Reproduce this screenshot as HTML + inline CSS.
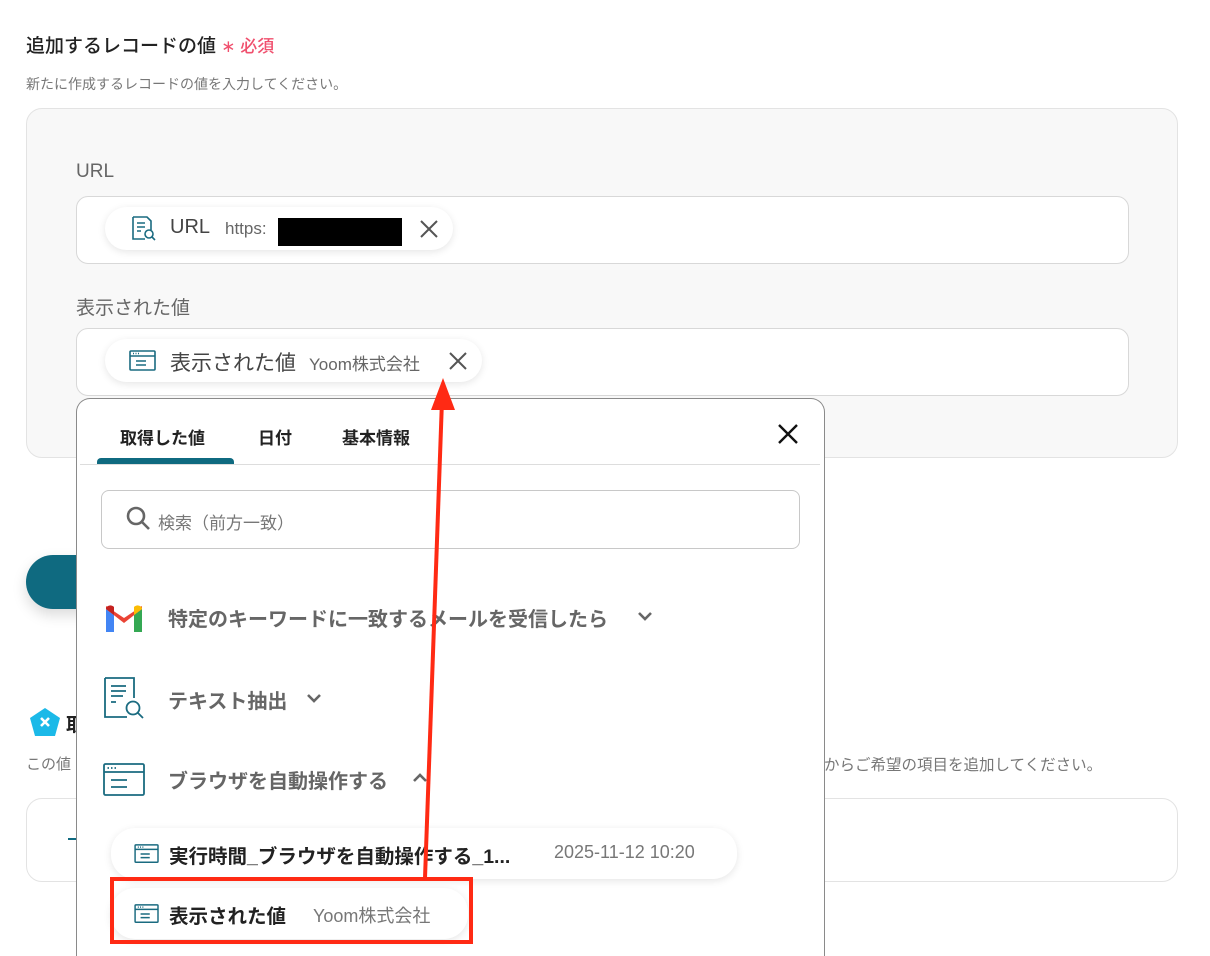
<!DOCTYPE html>
<html><head><meta charset="utf-8"><style>
*{box-sizing:border-box;margin:0;padding:0}
html,body{width:1210px;height:956px;overflow:hidden}
body{background:#fff;font-family:"Liberation Sans","Noto Sans CJK JP",sans-serif;position:relative;color:#333}
.abs{position:absolute}
.chip{position:absolute;background:#fff;border-radius:24px;box-shadow:0 2px 8px rgba(0,0,0,.1);display:flex;align-items:center}
.lbl{font-size:19px;color:#666}
</style></head><body>
<div class="abs" style="left:26px;top:31px;font-size:19px;font-weight:500;color:#222">追加するレコードの値 <span style="color:#f0506e;font-size:17px">∗ 必須</span></div>
<div class="abs" style="left:26px;top:74px;font-size:14px;color:#777">新たに作成するレコードの値を入力してください。</div>
<div class="abs" style="left:26px;top:108px;width:1152px;height:350px;background:#f8f8f8;border:1px solid #e3e3e3;border-radius:16px"></div>
<div class="abs lbl" style="left:76px;top:161px">URL</div>
<div class="abs" style="left:76px;top:196px;width:1053px;height:68px;background:#fff;border:1px solid #d8d8d8;border-radius:12px"></div>
<div class="chip" style="left:105px;top:207px;width:348px;height:43px">
<svg class="abs" style="left:25px;top:8px" width="28" height="28" viewBox="0 0 28 28" fill="none" stroke="#1a6b80" stroke-width="1.6"><path d="M3 2h14l4 4v9M3 2v22h12"/><path d="M7 8h8M7 12h8M7 16h4"/><circle cx="19" cy="19" r="4"/><path d="M22 22l3 3"/></svg>
<span class="abs" style="left:65px;top:9px;font-size:20px;color:#444">URL</span>
<span class="abs" style="left:120px;top:12px;font-size:17px;color:#666">https:</span>
<div class="abs" style="left:173px;top:11px;width:124px;height:28px;background:#000"></div>
<svg class="abs" style="left:315px;top:13px" width="18" height="18" viewBox="0 0 18 18"><path d="M1 1l16 16M17 1L1 17" stroke="#555" stroke-width="2"/></svg>
</div>
<div class="abs lbl" style="left:76px;top:293px">表示された値</div>
<div class="abs" style="left:76px;top:328px;width:1053px;height:68px;background:#fff;border:1px solid #d8d8d8;border-radius:12px"></div>
<div class="chip" style="left:105px;top:339px;width:377px;height:43px">
<svg class="abs" style="left:24px;top:10px" width="28" height="24" viewBox="0 0 28 24" fill="none" stroke="#1a6b80" stroke-width="1.6"><rect x="1" y="2" width="25" height="19" rx="1"/><path d="M1 7h25M7 12h10M7 16h10"/><path d="M4 4.5h1M6.5 4.5h1M9 4.5h1"/></svg>
<span class="abs" style="left:65px;top:8px;font-size:21px;color:#444">表示された値</span>
<span class="abs" style="left:204px;top:11px;font-size:17px;color:#666">Yoom株式会社</span>
<svg class="abs" style="left:344px;top:13px" width="18" height="18" viewBox="0 0 18 18"><path d="M1 1l16 16M17 1L1 17" stroke="#555" stroke-width="2"/></svg>
</div>
<div class="abs" style="left:26px;top:555px;width:100px;height:54px;background:#0f6a80;border-radius:27px;box-shadow:0 6px 14px rgba(0,0,0,.15)"></div>
<svg class="abs" style="left:29px;top:707px" width="32" height="30" viewBox="0 0 32 30"><path d="M16 1L31 11L26 29H6L1 11Z" fill="#1bb9e8"/><path d="M12 11l8 8M20 11l-8 8" stroke="#fff" stroke-width="2.6"/></svg>
<div class="abs" style="left:66px;top:710px;font-size:19px;font-weight:bold;color:#222">取</div>
<div class="abs" style="left:26px;top:753px;font-size:15px;color:#777">この値</div>
<div class="abs" style="left:824px;top:753px;font-size:15.5px;color:#777">からご希望の項目を追加してください。</div>
<div class="abs" style="left:26px;top:798px;width:1152px;height:84px;background:#fff;border:1px solid #e3e3e3;border-radius:16px"></div>
<div class="abs" style="left:68px;top:838px;width:12px;height:2px;background:#0f6a80"></div>
<div class="abs" style="left:76px;top:398px;width:749px;height:558px;background:#fff;border:1.5px solid #8a8a8a;border-bottom:none;border-radius:14px 14px 0 0"></div>
<div class="abs" style="left:120px;top:424px;font-size:17px;font-weight:bold;color:#222">取得した値</div>
<div class="abs" style="left:258px;top:424px;font-size:17px;font-weight:bold;color:#222">日付</div>
<div class="abs" style="left:342px;top:424px;font-size:17px;font-weight:bold;color:#222">基本情報</div>
<div class="abs" style="left:97px;top:458px;width:137px;height:6px;background:#0f6a80;border-radius:4px 4px 0 0"></div>
<div class="abs" style="left:80px;top:464px;width:740px;height:1px;background:#ddd"></div>
<svg class="abs" style="left:777px;top:423px" width="22" height="22" viewBox="0 0 22 22"><path d="M2 2l18 18M20 2L2 20" stroke="#111" stroke-width="2.4"/></svg>
<div class="abs" style="left:101px;top:490px;width:699px;height:59px;border:1px solid #c8c8c8;border-radius:8px"></div>
<svg class="abs" style="left:126px;top:506px" width="26" height="26" viewBox="0 0 26 26" fill="none" stroke="#666" stroke-width="2.6"><circle cx="10" cy="10" r="8"/><path d="M16 16l7 7"/></svg>
<div class="abs" style="left:158px;top:509px;font-size:17px;color:#777">検索（前方一致）</div>
<svg class="abs" style="left:104px;top:603px" width="40" height="29" viewBox="0 0 40 29"><path d="M2 6v23h8V12z" fill="#4285f4"/><path d="M30 12v17h8V6z" fill="#34a853"/><path d="M2 6l18 14L38 6V3L20 15 2 3z" fill="#ea4335"/><path d="M30 4v8l8-6V5a5 5 0 00-8-1z" fill="#fbbc04"/><path d="M10 4v8L2 6V5a5 5 0 018-1z" fill="#c5221f"/></svg>
<div class="abs" style="left:168px;top:603px;font-size:20px;font-weight:bold;color:#666">特定のキーワードに一致するメールを受信したら</div>
<svg class="abs" style="left:637px;top:610px" width="16" height="12" viewBox="0 0 16 12"><path d="M2 3l6 6 6-6" fill="none" stroke="#666" stroke-width="2.6"/></svg>
<svg class="abs" style="left:103px;top:676px" width="44" height="44" viewBox="0 0 44 44" fill="none" stroke="#1a6b80" stroke-width="1.8"><path d="M2 2h29v20M2 2v39h22"/><path d="M8 10h15M8 15h15M8 20h12M8 26h5"/><circle cx="30" cy="32" r="6.5"/><path d="M35 37l5 5"/></svg>
<div class="abs" style="left:168px;top:685px;font-size:20px;font-weight:bold;color:#666">テキスト抽出</div>
<svg class="abs" style="left:306px;top:692px" width="16" height="12" viewBox="0 0 16 12"><path d="M2 3l6 6 6-6" fill="none" stroke="#666" stroke-width="2.6"/></svg>
<svg class="abs" style="left:103px;top:763px" width="43" height="34" viewBox="0 0 43 34" fill="none" stroke="#1a6b80" stroke-width="1.8"><rect x="1" y="1" width="40" height="31" rx="1.5"/><path d="M1 9h40M8 17h16M8 24h16"/><path d="M4.5 5h1.5M8 5h1.5M11.5 5h1.5"/></svg>
<div class="abs" style="left:168px;top:765px;font-size:20px;font-weight:bold;color:#666">ブラウザを自動操作する</div>
<svg class="abs" style="left:412px;top:772px" width="16" height="12" viewBox="0 0 16 12"><path d="M2 9l6-6 6 6" fill="none" stroke="#666" stroke-width="2.6"/></svg>
<div class="chip" style="left:111px;top:828px;width:626px;height:51px">
<svg class="abs" style="left:23px;top:15px" width="26" height="22" viewBox="0 0 28 24" fill="none" stroke="#1a6b80" stroke-width="1.6"><rect x="1" y="2" width="25" height="19" rx="1"/><path d="M1 7h25M7 12h10M7 16h10"/><path d="M4 4.5h1M6.5 4.5h1M9 4.5h1"/></svg>
<span class="abs" style="left:58px;top:12px;font-size:19.5px;font-weight:bold;color:#222">実行時間_ブラウザを自動操作する_1...</span>
<span class="abs" style="left:443px;top:14px;font-size:18px;color:#777">2025-11-12 10:20</span>
</div>
<div class="chip" style="left:111px;top:888px;width:357px;height:51px">
<svg class="abs" style="left:23px;top:15px" width="26" height="22" viewBox="0 0 28 24" fill="none" stroke="#1a6b80" stroke-width="1.6"><rect x="1" y="2" width="25" height="19" rx="1"/><path d="M1 7h25M7 12h10M7 16h10"/><path d="M4 4.5h1M6.5 4.5h1M9 4.5h1"/></svg>
<span class="abs" style="left:58px;top:12px;font-size:19.5px;font-weight:bold;color:#222">表示された値</span>
<span class="abs" style="left:202px;top:14px;font-size:18px;color:#777">Yoom株式会社</span>
</div>
<div class="abs" style="left:110px;top:877px;width:363px;height:67px;border:4px solid #ff2a14"></div>
<svg class="abs" style="left:0;top:0" width="1210" height="956"><path d="M425 878L442 400" stroke="#ff2a14" stroke-width="4"/><path d="M443 378L431 410L455 410Z" fill="#ff2a14"/></svg>
</body></html>
